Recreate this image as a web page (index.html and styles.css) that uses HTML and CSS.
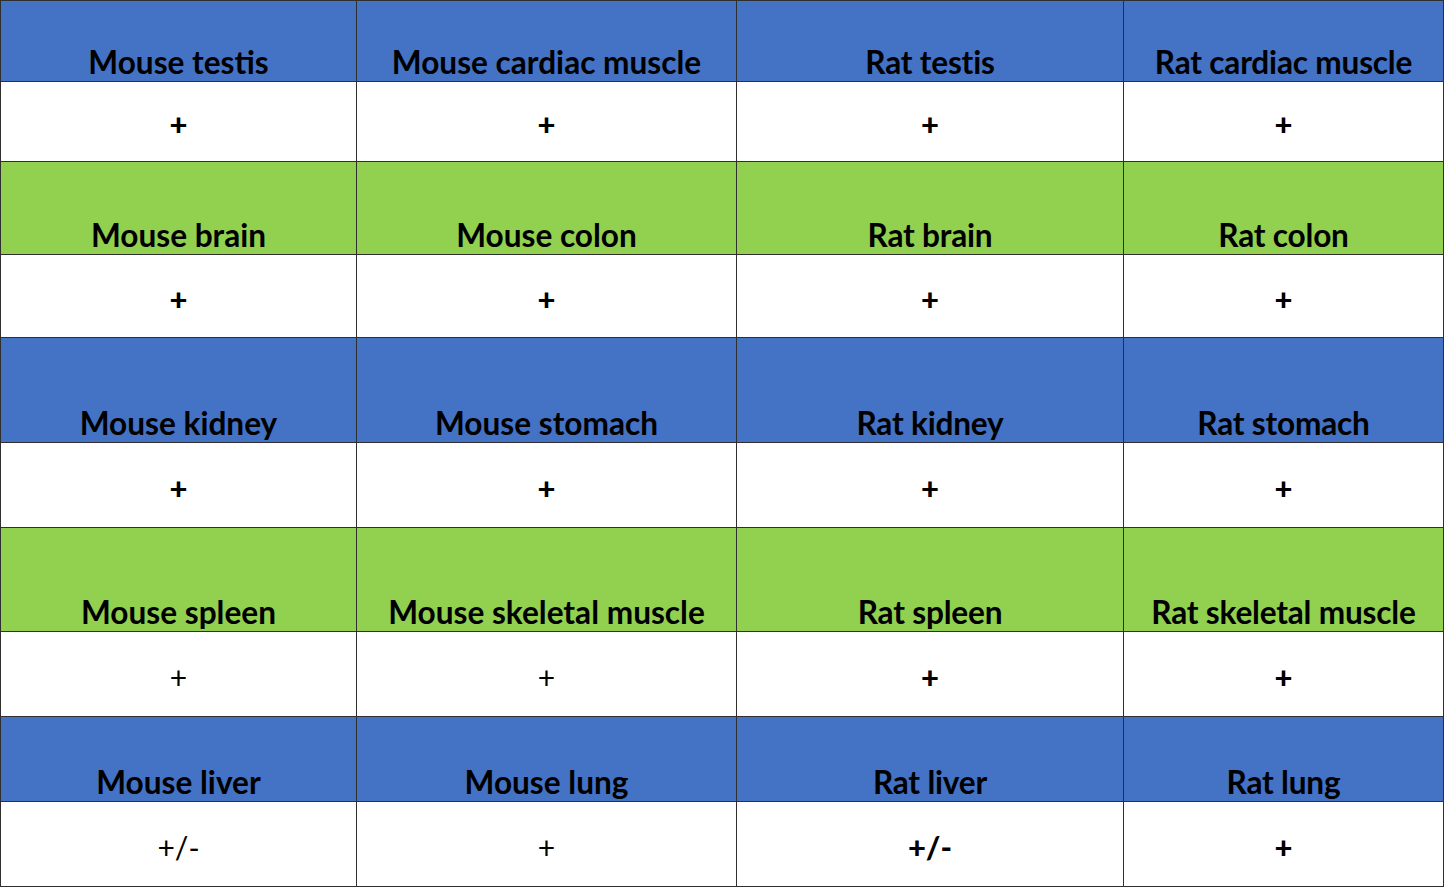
FILE: index.html
```html
<!DOCTYPE html>
<html>
<head>
<meta charset="utf-8">
<link rel="stylesheet" href="styles.css">
</head>
<body>
<table class="grid">
  <colgroup>
    <col class="c1"><col class="c2"><col class="c3"><col class="c4">
  </colgroup>
  <tr class="head blue r1">
    <td><span class="lbl">Mouse testis</span></td>
    <td><span class="lbl">Mouse cardiac muscle</span></td>
    <td><span class="lbl rat">Rat testis</span></td>
    <td><span class="lbl rat">Rat cardiac muscle</span></td>
  </tr>
  <tr class="val v1">
    <td><span class="b">+</span></td>
    <td><span class="b">+</span></td>
    <td><span class="b">+</span></td>
    <td><span class="b">+</span></td>
  </tr>
  <tr class="head green r2">
    <td><span class="lbl">Mouse brain</span></td>
    <td><span class="lbl">Mouse colon</span></td>
    <td><span class="lbl rat">Rat brain</span></td>
    <td><span class="lbl rat">Rat colon</span></td>
  </tr>
  <tr class="val v2">
    <td><span class="b">+</span></td>
    <td><span class="b">+</span></td>
    <td><span class="b">+</span></td>
    <td><span class="b">+</span></td>
  </tr>
  <tr class="head blue r3">
    <td><span class="lbl">Mouse kidney</span></td>
    <td><span class="lbl">Mouse stomach</span></td>
    <td><span class="lbl rat">Rat kidney</span></td>
    <td><span class="lbl rat">Rat stomach</span></td>
  </tr>
  <tr class="val v3">
    <td><span class="b">+</span></td>
    <td><span class="b">+</span></td>
    <td><span class="b">+</span></td>
    <td><span class="b">+</span></td>
  </tr>
  <tr class="head green r4">
    <td><span class="lbl">Mouse spleen</span></td>
    <td><span class="lbl">Mouse skeletal muscle</span></td>
    <td><span class="lbl rat">Rat spleen</span></td>
    <td><span class="lbl rat">Rat skeletal muscle</span></td>
  </tr>
  <tr class="val v4">
    <td><span class="n">+</span></td>
    <td><span class="n">+</span></td>
    <td><span class="b">+</span></td>
    <td><span class="b">+</span></td>
  </tr>
  <tr class="head blue r5">
    <td><span class="lbl">Mouse liver</span></td>
    <td><span class="lbl">Mouse lung</span></td>
    <td><span class="lbl rat">Rat liver</span></td>
    <td><span class="lbl rat">Rat lung</span></td>
  </tr>
  <tr class="val v5">
    <td><span class="n">+/-</span></td>
    <td><span class="n">+</span></td>
    <td><span class="b">+/-</span></td>
    <td><span class="b">+</span></td>
  </tr>
</table>
</body>
</html>
```

FILE: styles.css
```css
html, body {
  margin: 0;
  padding: 0;
  background: #ffffff;
}

.grid {
  border-collapse: collapse;
  table-layout: fixed;
  width: 1443px;
  font-family: Lato, "Open Sans", sans-serif;
  color: #000;
}

.c1 { width: 356px; }
.c2 { width: 380px; }
.c3 { width: 387px; }
.c4 { width: 320px; }

.grid td {
  border: 1px solid #2f2f2f;
  padding: 0;
  text-align: center;
}

.head td {
  vertical-align: bottom;
  padding-bottom: 1px;
}

.blue td { background: #4472c4; }
.green td { background: #92d050; }

.val td {
  background: #fff;
  vertical-align: middle;
  padding-top: 5px;
}

.r1 { height: 81px; }
.v1 { height: 80px; }
.r2 { height: 93px; }
.v2 { height: 83px; }
.r3 { height: 105px; }
.v3 { height: 85px; }
.r4 { height: 104px; }
.v4 { height: 85px; }
.r5 { height: 85px; }
.v5 { height: 85px; }

.lbl {
  display: inline-block;
  font-weight: 700;
  font-size: 31.6px;
  line-height: 36px;
  white-space: nowrap;
}

.lbl.rat {
  letter-spacing: -0.2px;
}

.b {
  display: inline-block;
  font-weight: 900;
  font-size: 31px;
  line-height: 30px;
}

.n {
  display: inline-block;
  font-weight: 400;
  font-size: 30px;
  line-height: 30px;
}
```
